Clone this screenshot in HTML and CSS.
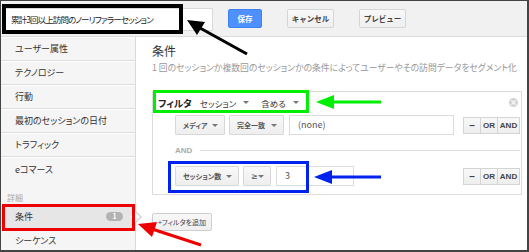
FILE: index.html
```html
<!DOCTYPE html>
<html lang="ja">
<head>
    <meta charset="UTF-8">
    <meta name="viewport" content="width=device-width, initial-scale=1.0">
    <title>セグメント編集</title>
    <link rel="stylesheet" href="styles.css">
</head>
<body>
    <div class="frame">
        <div class="topbar">
            <div class="name-field">累計3回以上訪問のノーリファラーセッション</div>
            <button class="btn btn-save">保存</button>
            <button class="btn btn-plain">キャンセル</button>
            <button class="btn btn-plain">プレビュー</button>
        </div>

        <div class="layout">
            <ul class="sidebar">
                <li class="nav-item">ユーザー属性</li>
                <li class="nav-item">テクノロジー</li>
                <li class="nav-item">行動</li>
                <li class="nav-item">最初のセッションの日付</li>
                <li class="nav-item">トラフィック</li>
                <li class="nav-item nav-last">eコマース</li>
                <li class="section-label">詳細</li>
                <li class="nav-item active">条件 <span class="badge">1</span></li>
                <li class="nav-item">シーケンス</li>
            </ul>

            <div class="main">
                <h2 class="title">条件</h2>
                <p class="subtitle">1 回のセッションか複数回のセッションかの条件によってユーザーやその訪問データをセグメント化</p>

                <div class="panel">
                    <div class="panel-head">
                        <span class="filter-label">フィルタ</span>
                        <span class="head-select">セッション <i class="caret"></i></span>
                        <span class="head-select">含める <i class="caret"></i></span>
                        <span class="close">×</span>
                    </div>

                    <div class="cond-row">
                        <span class="sel sel-dim">メディア <i class="caret"></i></span>
                        <span class="sel sel-match">完全一致 <i class="caret"></i></span>
                        <span class="value value-wide">(none)</span>
                        <span class="ops">
                            <span class="op op-minus">–</span>
                            <span class="op">OR</span>
                            <span class="op op-and">AND</span>
                        </span>
                    </div>

                    <div class="and-sep"><span>AND</span></div>

                    <div class="cond-row">
                        <span class="sel sel-count">セッション数 <i class="caret"></i></span>
                        <span class="sel sel-op"><span class="ge">≥</span> <i class="caret"></i></span>
                        <span class="value value-num">3</span>
                        <span class="ops">
                            <span class="op op-minus">–</span>
                            <span class="op">OR</span>
                            <span class="op op-and">AND</span>
                        </span>
                    </div>
                </div>

                <button class="btn btn-add">+フィルタを追加</button>
            </div>
        </div>

        <!-- annotation marks -->
        <div class="mark mark-black"></div>
        <div class="mark mark-green"></div>
        <div class="mark mark-blue"></div>
        <div class="mark mark-red"></div>

        <svg class="arrows" width="529" height="252" viewBox="0 0 529 252">
            <line x1="247" y1="54" x2="200" y2="28" stroke="#000" stroke-width="3"/>
            <polygon points="187,20 205,22 197,35" fill="#000"/>
            <line x1="333" y1="102" x2="381" y2="102" stroke="#00ee00" stroke-width="3"/>
            <polygon points="316,102 334,95 334,109" fill="#00ee00"/>
            <line x1="331" y1="177" x2="381" y2="177" stroke="#0022ee" stroke-width="3"/>
            <polygon points="314,177 332,170 332,184" fill="#0022ee"/>
            <line x1="201" y1="245" x2="152" y2="229" stroke="#ee0000" stroke-width="3"/>
            <polygon points="138,224 157,222 152,237" fill="#ee0000"/>
        </svg>
    </div>
</body>
</html>
```

FILE: styles.css
```css
body {
    margin: 0;
    font-family: "Noto Sans CJK JP", "Noto Sans", sans-serif;
    color: #333;
    background: #fff;
}
.frame {
    position: relative;
    width: 529px;
    height: 252px;
    box-sizing: border-box;
    border: solid #444;
    border-width: 1px 2px 2px 1px;
    overflow: hidden;
    background: #fff;
}
.topbar {
    display: flex;
    align-items: flex-start;
    height: 36px;
    box-sizing: border-box;
    padding: 7px 0 0 3px;
    background: #f1f1f1;
    border-bottom: 1px solid #dcdcdc;
}
.name-field {
    width: 209px;
    height: 23px;
    box-sizing: border-box;
    padding-left: 6px;
    background: #fff;
    border: 1px solid #d9d9d9;
    font-size: 8.5px;
    letter-spacing: -0.9px;
    line-height: 21px;
    color: #222;
    white-space: nowrap;
    font-feature-settings: "palt";
}
.btn {
    font-family: inherit;
    height: 19px;
    margin-top: 1px;
    padding: 0;
    border-radius: 2px;
    font-size: 7.5px;
    font-weight: bold;
    line-height: 17px;
    cursor: pointer;
}
.btn-save {
    width: 34px;
    margin-left: 15px;
    background: #4d90fe;
    border: 1px solid #3d82f2;
    color: #fff;
}
.btn-plain {
    width: 47px;
    margin-left: 25px;
    background: linear-gradient(#f8f8f8, #efefef);
    border: 1px solid #d6d6d6;
    color: #444;
}
.layout {
    display: flex;
    height: 213px;
}
.sidebar {
    list-style: none;
    margin: 0;
    padding: 0;
    width: 134px;
    flex-shrink: 0;
    background: #f5f5f5;
    border-right: 1px solid #dadada;
}
.nav-item {
    display: flex;
    align-items: center;
    height: 24px;
    box-sizing: border-box;
    padding: 0 12px 0 14px;
    border-bottom: 1px solid #dedede;
    box-shadow: inset 0 1px 0 #fff;
    font-size: 9px;
    color: #333;
    font-feature-settings: "palt";
    white-space: nowrap;
}
.nav-last {
    border-bottom: none;
}
.section-label {
    height: 24px;
    box-sizing: border-box;
    padding: 12px 0 0 6px;
    font-size: 8px;
    line-height: 10px;
    color: #aaa;
}
.nav-item.active {
    position: relative;
    background: #e6e6e6;
    justify-content: space-between;
}
.nav-item.active::after {
    content: "";
    position: absolute;
    right: -5px;
    top: 8px;
    width: 7px;
    height: 7px;
    background: #fff;
    border-top: 1px solid #c8c8c8;
    border-right: 1px solid #c8c8c8;
    transform: rotate(45deg);
}
.badge {
    width: 17px;
    height: 9px;
    border-radius: 5px;
    background: #b3b3b3;
    color: #fff;
    font-size: 7px;
    font-weight: bold;
    line-height: 9px;
    text-align: center;
}
.main {
    flex: 1;
    min-width: 0;
    overflow: hidden;
    padding-left: 16px;
    background: #fff;
}
.title {
    margin: 7px 0 0;
    font-size: 12px;
    font-weight: normal;
    line-height: 14px;
    color: #333;
}
.subtitle {
    margin: 4px 0 0;
    font-size: 8.8px;
    line-height: 12px;
    color: #999;
    white-space: nowrap;
    font-feature-settings: "palt";
}
.panel {
    width: 370px;
    height: 104px;
    box-sizing: border-box;
    margin-top: 17px;
    border: 1px solid #dcdcdc;
    background: #fff;
}
.panel-head {
    display: flex;
    align-items: center;
    height: 21px;
    padding-left: 5px;
}
.filter-label {
    font-size: 9.5px;
    font-weight: bold;
    color: #222;
    font-feature-settings: "palt";
}
.head-select {
    display: flex;
    align-items: center;
    gap: 7px;
    margin-left: 8px;
    font-size: 8.5px;
    color: #333;
    font-feature-settings: "palt";
}
.head-select + .head-select {
    margin-left: 12px;
}
.caret {
    display: inline-block;
    width: 0;
    height: 0;
    border-left: 3px solid transparent;
    border-right: 3px solid transparent;
    border-top: 3px solid #777;
}
.close {
    margin-left: auto;
    margin-right: 3px;
    width: 9px;
    height: 9px;
    border-radius: 50%;
    background: #d3d3d3;
    color: #fff;
    font-size: 8px;
    font-weight: bold;
    line-height: 9px;
    text-align: center;
}
.cond-row {
    display: flex;
    align-items: center;
    height: 20px;
    margin-top: 2px;
    padding-left: 22px;
}
.and-sep + .cond-row {
    margin-top: 9px;
}
.sel {
    display: flex;
    align-items: center;
    justify-content: space-between;
    height: 20px;
    box-sizing: border-box;
    padding: 0 6px 0 7px;
    margin-right: 4px;
    background: linear-gradient(#f8f8f8, #eeeeee);
    border: 1px solid #d8d8d8;
    border-radius: 1px;
    font-size: 7px;
    font-weight: bold;
    color: #555;
    white-space: nowrap;
    font-feature-settings: "palt";
}
.sel-dim { width: 50px; }
.sel-match { width: 55px; }
.sel-count { width: 64px; }
.sel-op { width: 28px; }
.ge {
    font-family: "DejaVu Sans", sans-serif;
    font-weight: normal;
    font-size: 8px;
}
.value {
    height: 20px;
    box-sizing: border-box;
    margin-left: 1px;
    padding-left: 8px;
    border: 1px solid #dcdcdc;
    background: #fff;
    font-size: 9px;
    line-height: 18px;
    color: #555;
}
.value-wide { width: 165px; }
.value-num { width: 78px; }
.ops {
    display: flex;
    margin-left: auto;
    margin-right: 1px;
    height: 17px;
}
.op {
    width: 17px;
    box-sizing: border-box;
    border: 1px solid #d4d4d4;
    border-left-width: 0;
    background: linear-gradient(#f8f8f8, #eeeeee);
    font-family: "Liberation Sans", sans-serif;
    font-size: 8px;
    font-weight: bold;
    line-height: 15px;
    text-align: center;
    color: #444;
}
.op-minus {
    width: 18px;
    border-left-width: 1px;
    font-size: 10px;
}
.op-and { width: 22px; }
.and-sep {
    display: flex;
    align-items: center;
    height: 14px;
    margin: 8px 1px 0 22px;
    font-family: "Liberation Sans", sans-serif;
    font-size: 8px;
    font-weight: bold;
    color: #aaa;
}
.and-sep::after {
    content: "";
    flex: 1;
    margin-left: 8px;
    border-top: 1px solid #dcdcdc;
}
.btn-add {
    display: block;
    width: 60px;
    height: 18px;
    margin-top: 18px;
    background: linear-gradient(#f8f8f8, #efefef);
    border: 1px solid #cfcfcf;
    color: #444;
    font-weight: normal;
    font-size: 7px;
    line-height: 16px;
    white-space: nowrap;
    font-feature-settings: "palt";
}
.mark {
    position: absolute;
    box-sizing: border-box;
    pointer-events: none;
}
.mark-black {
    left: 1px;
    top: 3px;
    width: 181px;
    height: 30px;
    border: 4px solid #000;
}
.mark-green {
    left: 152px;
    top: 89px;
    width: 156px;
    height: 23px;
    border: 3px solid #00ee00;
}
.mark-blue {
    left: 167px;
    top: 160px;
    width: 141px;
    height: 32px;
    border: 3px solid #0022ee;
}
.mark-red {
    left: 1px;
    top: 203px;
    width: 133px;
    height: 27px;
    border: 3px solid #ee0000;
}
.arrows {
    position: absolute;
    left: -1px;
    top: -1px;
    pointer-events: none;
}
```
